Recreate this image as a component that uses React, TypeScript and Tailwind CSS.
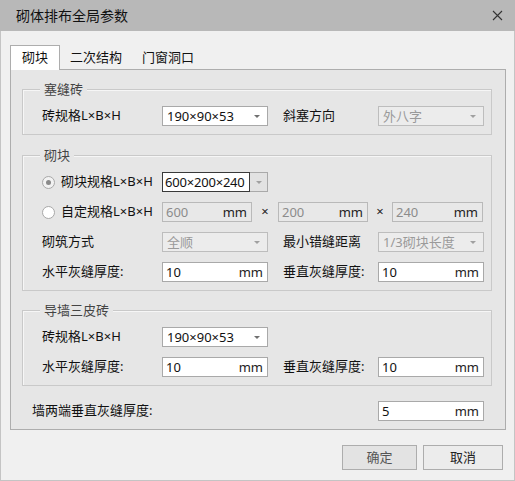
import React from 'react';

const FONT = '"Noto Sans", "Noto Sans CJK SC", sans-serif';

function Arrow({ disabled = false }: { disabled?: boolean }) {
  return (
    <svg width="6" height="3" viewBox="0 0 6 3" className="shrink-0">
      <polygon points="0,0 6,0 3,3" fill={disabled ? '#a0a0a0' : '#707070'} />
    </svg>
  );
}

function Combo({ value, disabled = false, width = 'w-[106px]' }: { value: string; disabled?: boolean; width?: string }) {
  return (
    <div
      className={`${width} h-[20px] flex items-center justify-between pl-[4px] pr-[7px] border ${
        disabled ? 'bg-[#ececec] border-[#bdbdbd] text-[#9a9a9a]' : 'bg-white border-[#a9a9a9] text-[#111]'
      }`}
    >
      <span className="leading-none">{value}</span>
      <Arrow disabled={disabled} />
    </div>
  );
}

function EditCombo({ value }: { value: string }) {
  return (
    <div className="w-[106px] h-[20px] flex">
      <div className="flex-1 bg-white border border-[#3a3a3a] flex items-center pl-[2px] leading-none text-[#111] tracking-[-0.2px]">
        {value}
      </div>
      <div className="w-[18px] bg-[#e2e2e2] border border-l-0 border-[#a9a9a9] flex items-center justify-center">
        <Arrow disabled />
      </div>
    </div>
  );
}

function Field({ value, disabled = false, width = 'w-[106px]' }: { value: string; disabled?: boolean; width?: string }) {
  return (
    <div
      className={`${width} h-[20px] flex items-center justify-between pl-[3px] pr-[4px] border ${
        disabled ? 'bg-[#e8e8e8] border-[#b9b9b9]' : 'bg-white border-[#a9a9a9]'
      }`}
    >
      <span className={`leading-none ${disabled ? 'text-[#8c8c8c]' : 'text-[#111]'}`}>{value}</span>
      <span className="leading-none text-[#222]">mm</span>
    </div>
  );
}

function Radio({ checked = false }: { checked?: boolean }) {
  return (
    <span
      className={`w-[13px] h-[13px] rounded-full border flex items-center justify-center shrink-0 ${
        checked ? 'bg-[#f2f2f2] border-[#a8a8a8]' : 'bg-white border-[#a8a8a8]'
      }`}
    >
      {checked && <span className="w-[5px] h-[5px] rounded-full bg-[#8a8a8a]" />}
    </span>
  );
}

function Group({ title, children, className = '' }: { title: string; children: React.ReactNode; className?: string }) {
  return (
    <div className={`relative border border-[#c9c9c9] shadow-[inset_1px_1px_0_#f6f6f6] pt-[16px] pb-[8px] pl-[19px] ${className}`}>
      <span className="absolute left-[17px] -top-[9px] px-[4px] bg-[#e6e6e6] text-[#444] leading-[16px]">{title}</span>
      <div className="flex flex-col gap-[10px]">{children}</div>
    </div>
  );
}

function Row({ children }: { children: React.ReactNode }) {
  return <div className="flex items-center h-[20px]">{children}</div>;
}

export default function App() {
  return (
    <div className="w-[515px] h-[481px] flex flex-col text-[13px] text-[#111]" style={{ fontFamily: FONT }}>
      {/* title bar */}
      <div className="h-[31px] bg-[#b8b8b8] flex items-center justify-between pl-[16px] pr-[12px] shrink-0">
        <span className="text-[14px] text-[#111] leading-none">砌体排布全局参数</span>
        <svg width="11" height="11" viewBox="0 0 11 11">
          <path d="M1 1 L10 10 M10 1 L1 10" stroke="#333" strokeWidth="1.1" fill="none" />
        </svg>
      </div>

      <div className="flex-1 bg-[#f0f0f0] border border-t-0 border-[#c4c4c4] flex flex-col pl-[9px] pr-[8px]">
        {/* tabs */}
        <div className="flex items-end h-[38px] pt-[14px]">
          <div className="h-[25px] px-[11px] bg-white border border-b-0 border-[#adadad] flex items-center relative top-[1px] z-10">
            砌块
          </div>
          <div className="h-[22px] px-[10px] flex items-center">二次结构</div>
          <div className="h-[22px] px-[10px] flex items-center">门窗洞口</div>
        </div>

        {/* panel */}
        <div className="w-[496px] h-[361px] bg-[#e6e6e6] border border-[#adadad] flex flex-col pt-[19px] pl-[11px] pr-[13px]">
          <Group title="塞缝砖">
            <Row>
              <span className="w-[120px]">砖规格L×B×H</span>
              <Combo value="190×90×53" />
              <span className="w-[95px] ml-[15px]">斜塞方向</span>
              <Combo value="外八字" disabled />
            </Row>
          </Group>

          <Group title="砌块" className="mt-[20px]">
            <Row>
              <span className="w-[120px] flex items-center gap-[6px]">
                <Radio checked />
                砌块规格L×B×H
              </span>
              <EditCombo value="600×200×240" />
            </Row>
            <Row>
              <span className="w-[120px] flex items-center gap-[6px]">
                <Radio />
                自定规格L×B×H
              </span>
              <Field value="600" disabled width="w-[90px]" />
              <span className="w-[26px] text-center text-[#222]">×</span>
              <Field value="200" disabled width="w-[90px]" />
              <span className="w-[24px] text-center text-[#222]">×</span>
              <Field value="240" disabled width="w-[91px]" />
            </Row>
            <Row>
              <span className="w-[120px]">砌筑方式</span>
              <Combo value="全顺" disabled />
              <span className="w-[95px] ml-[15px]">最小错缝距离</span>
              <Combo value="1/3砌块长度" disabled />
            </Row>
            <Row>
              <span className="w-[120px]">水平灰缝厚度:</span>
              <Field value="10" />
              <span className="w-[95px] ml-[15px]">垂直灰缝厚度:</span>
              <Field value="10" />
            </Row>
          </Group>

          <Group title="导墙三皮砖" className="mt-[19px]">
            <Row>
              <span className="w-[120px]">砖规格L×B×H</span>
              <Combo value="190×90×53" />
            </Row>
            <Row>
              <span className="w-[120px]">水平灰缝厚度:</span>
              <Field value="10" />
              <span className="w-[95px] ml-[15px]">垂直灰缝厚度:</span>
              <Field value="10" />
            </Row>
          </Group>

          <div className="flex items-center justify-between h-[20px] mt-[15px] pl-[10px] pr-[8px]">
            <span>墙两端垂直灰缝厚度:</span>
            <Field value="5" />
          </div>
        </div>

        {/* buttons */}
        <div className="flex justify-end gap-[6px] mt-[15px] pr-[3px]">
          <button className="w-[75px] h-[25px] bg-[#e3e3e3] border border-[#adadad] text-[#555] leading-none">确定</button>
          <button className="w-[80px] h-[25px] bg-[#ececec] border border-[#adadad] text-[#222] leading-none">取消</button>
        </div>
      </div>
    </div>
  );
}
